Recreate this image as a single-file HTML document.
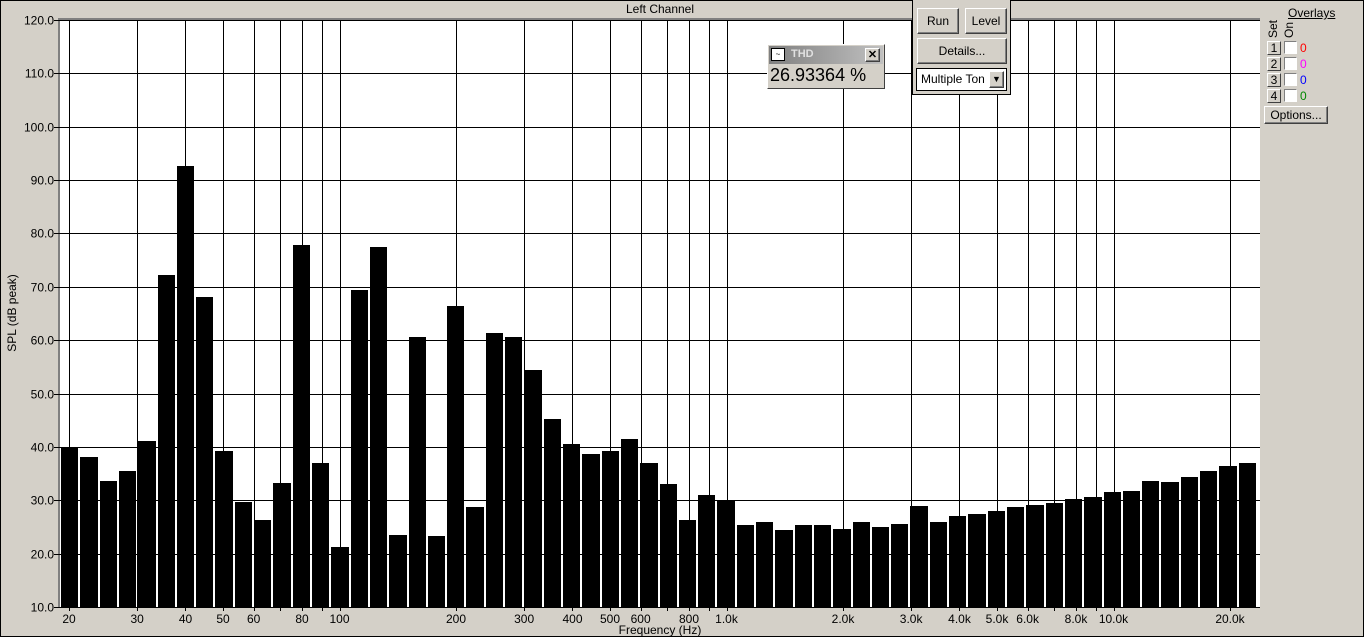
<!DOCTYPE html>
<html><head><meta charset="utf-8"><style>
body{margin:0;width:1364px;height:637px;overflow:hidden;background:#d4d0c8;font-family:"Liberation Sans",sans-serif;position:relative}
.frame{position:absolute;left:0;top:0;width:1362px;height:635px;border:1px solid #000}
.btn{position:absolute;background:#d4d0c8;border:1px solid;border-color:#fff #404040 #404040 #fff;box-shadow:inset -1px -1px #808080;font-size:12px;text-align:center;box-sizing:border-box}
.num{position:absolute;left:1267px;width:14px;height:14px;font-size:12px;line-height:13px;text-align:center;background:#d4d0c8;border:1px solid;border-color:#fff #404040 #404040 #fff;box-sizing:border-box}
.cb{position:absolute;left:1284px;width:13px;height:13px;background:#fff;border:1px solid;border-color:#808080 #fff #fff #808080;box-sizing:border-box}
.zv{position:absolute;left:1300px;font-size:12px}
</style></head><body>
<div class="frame"></div>
<svg id="s" width="1364" height="637" style="position:absolute;left:0;top:0" font-family="Liberation Sans" font-size="12"></svg>
<div style="position:absolute;left:912px;top:0;width:99px;height:95px;border:1px solid #000;border-top:none;box-sizing:border-box;background:#d4d0c8"></div>
<div class="btn" style="left:917px;top:8px;width:42px;height:26px;line-height:24px">Run</div>
<div class="btn" style="left:965px;top:8px;width:42px;height:26px;line-height:24px">Level</div>
<div class="btn" style="left:917px;top:38px;width:90px;height:26px;line-height:24px">Details...</div>
<div style="position:absolute;left:916px;top:68px;width:91px;height:23px;background:#fff;border:1px solid #000;box-sizing:border-box;font-size:12px;line-height:21px;padding-left:4px">Multiple Ton</div>
<div class="btn" style="left:989px;top:71px;width:15px;height:17px;font-size:9px;line-height:14px">▼</div>
<div style="position:absolute;left:767px;top:44px;width:118px;height:45px;border:1px solid;border-color:#fff #404040 #404040 #fff;box-sizing:border-box;background:#d4d0c8"></div>
<div style="position:absolute;left:769px;top:46px;width:114px;height:18px;background:linear-gradient(to right,#808080,#c0c0c0)"></div>
<div style="position:absolute;left:771px;top:48px;width:14px;height:13px;background:#fff;border:1px solid #000;box-sizing:border-box;font-size:8px;line-height:11px;text-align:center">~</div>
<div style="position:absolute;left:791px;top:48px;font-size:11px;font-weight:bold;color:#e0e0e0">THD</div>
<div class="btn" style="left:865px;top:48px;width:15px;height:14px;font-size:11px;line-height:12px;font-weight:bold">✕</div>
<div style="position:absolute;left:770px;top:65px;font-size:18px;color:#000">26.93364 %</div>
<div style="position:absolute;left:1288px;top:6px;font-size:12px;text-decoration:underline">Overlays</div>
<div style="position:absolute;left:1266px;font-size:12px;transform:rotate(-90deg);transform-origin:left top;top:38px">Set</div>
<div style="position:absolute;left:1282px;font-size:12px;transform:rotate(-90deg);transform-origin:left top;top:38px">On</div>
<div class="num" style="top:41px">1</div><div class="cb" style="top:41px"></div><div class="zv" style="top:41px;color:#f00">0</div>
<div class="num" style="top:57px">2</div><div class="cb" style="top:57px"></div><div class="zv" style="top:57px;color:#f0f">0</div>
<div class="num" style="top:73px">3</div><div class="cb" style="top:73px"></div><div class="zv" style="top:73px;color:#00f">0</div>
<div class="num" style="top:89px">4</div><div class="cb" style="top:89px"></div><div class="zv" style="top:89px;color:#080">0</div>
<div class="btn" style="left:1264px;top:106px;width:64px;height:18px;line-height:16px">Options...</div>
<script>
var s=document.getElementById('s'),h='';
var L=60,R=1260,T=20,B=607,dy=(B-T)/11;
h+='<rect x="'+(L-2)+'" y="'+(T-2)+'" width="'+(R-L+2)+'" height="'+(B-T+2)+'" fill="#808080"/>';
h+='<rect x="'+L+'" y="'+T+'" width="'+(R-L)+'" height="'+(B-T)+'" fill="#fff"/>';
function X(f){return 69+387*Math.log10(f/20);}
var fs=[20,30,40,50,60,70,80,90,100,200,300,400,500,600,700,800,900,1000,2000,3000,4000,5000,6000,7000,8000,9000,10000,20000];
fs.forEach(function(f){var x=Math.round(X(f))+.5;h+='<line x1="'+x+'" y1="'+T+'" x2="'+x+'" y2="'+(B+4)+'" stroke="#000"/>';});
for(var i=0;i<=11;i++){var y=Math.round(T+i*dy)+.5;h+='<line x1="'+(L-6)+'" y1="'+y+'" x2="'+R+'" y2="'+y+'" stroke="#000"/>';
h+='<text x="54" y="'+(y+4)+'" text-anchor="end" fill="#000">'+(120-i*10).toFixed(1)+'</text>';}
var v=[40,38.2,33.7,35.4,41.2,72.3,92.6,68,39.2,29.6,26.3,33.2,77.8,37,21.3,69.4,77.4,23.4,60.6,23.3,66.4,28.7,61.3,60.6,54.4,45.2,40.5,38.6,39.2,41.4,37,33,26.3,31,30,25.3,26,24.5,25.3,25.3,24.7,26,25,25.5,28.9,26,27,27.4,28,28.7,29.1,29.4,30.2,30.6,31.5,31.7,33.7,33.5,34.3,35.5,36.4,37];
var p=(1258-61)/62;
v.forEach(function(d,i){var x0=Math.round(61+i*p),x1=Math.round(61+(i+1)*p)-2;var y=Math.round(B-(d-10)*dy/10);
h+='<rect x="'+x0+'" y="'+y+'" width="'+(x1-x0)+'" height="'+(B-y)+'" fill="#000"/>';});
var lab=[[20,'20'],[30,'30'],[40,'40'],[50,'50'],[60,'60'],[80,'80'],[100,'100'],[200,'200'],[300,'300'],[400,'400'],[500,'500'],[600,'600'],[800,'800'],[1000,'1.0k'],[2000,'2.0k'],[3000,'3.0k'],[4000,'4.0k'],[5000,'5.0k'],[6000,'6.0k'],[8000,'8.0k'],[10000,'10.0k'],[20000,'20.0k']];
lab.forEach(function(a){h+='<text x="'+X(a[0])+'" y="623" text-anchor="middle">'+a[1]+'</text>';});
h+='<text x="660" y="634" text-anchor="middle">Frequency (Hz)</text>';
h+='<text x="660" y="13" text-anchor="middle">Left Channel</text>';
h+='<text transform="translate(16,313) rotate(-90)" text-anchor="middle">SPL (dB peak)</text>';
s.innerHTML=h;
</script>
</body></html>
